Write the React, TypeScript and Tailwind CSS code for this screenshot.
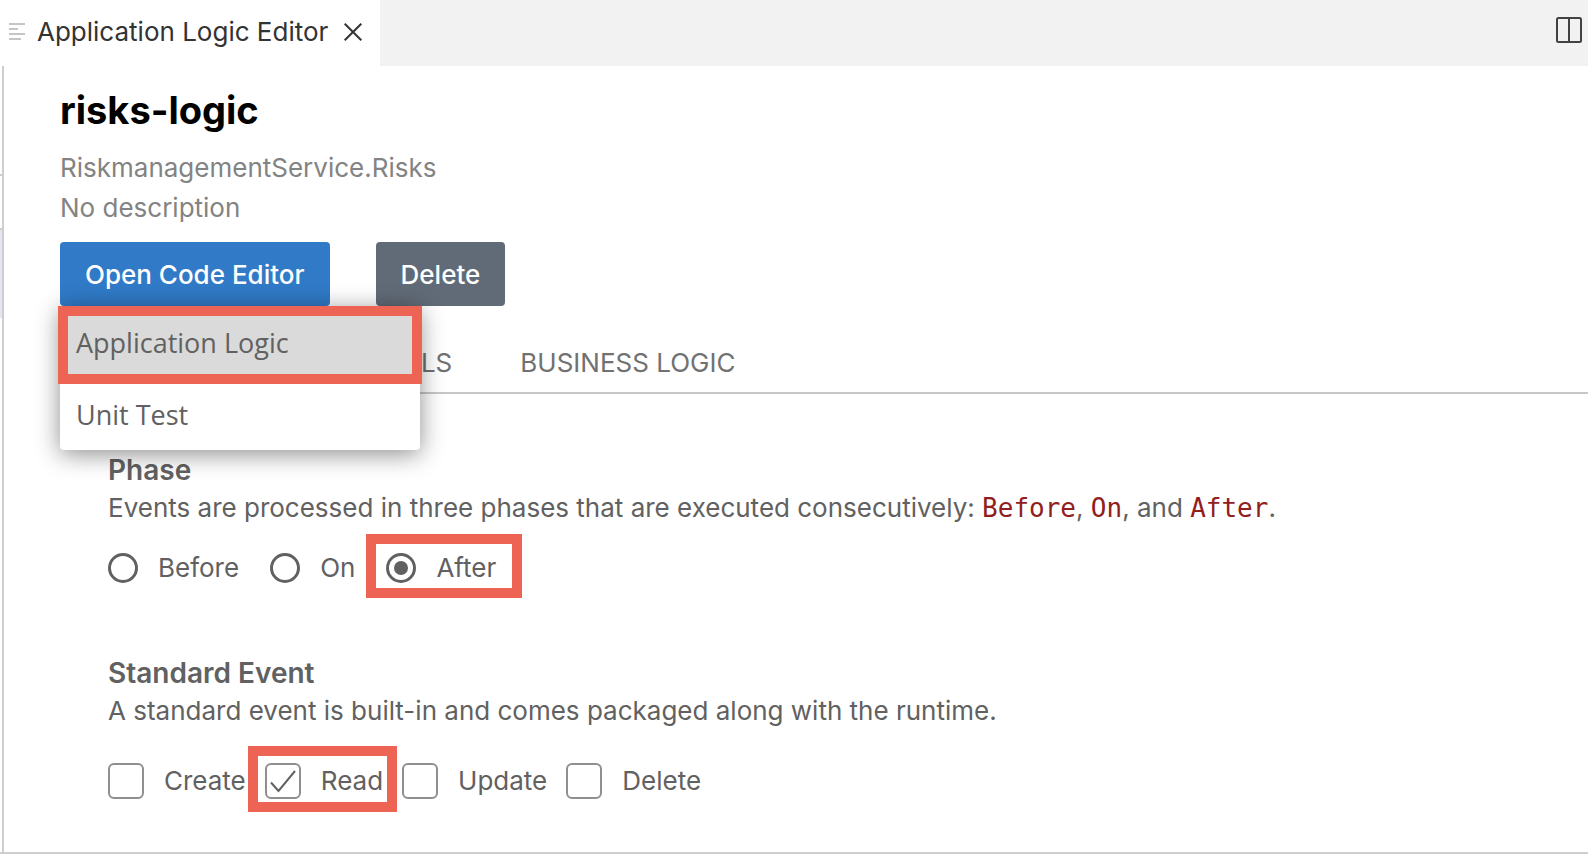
import { useState } from "react";

function LinesIcon() {
  return (
    <svg width="16" height="18" viewBox="0 0 16 18" fill="#c5c5c5" aria-hidden="true">
      <rect x="0" y="0" width="16" height="2" />
      <rect x="0" y="5" width="9" height="2" />
      <rect x="0" y="10" width="16" height="2" />
      <rect x="0" y="15" width="12" height="2" />
    </svg>
  );
}

function CloseIcon() {
  return (
    <svg width="18" height="18" viewBox="0 0 18 18" fill="none" stroke="#333333" strokeWidth="2" aria-hidden="true">
      <path d="M0.7 0.7 17.3 17.3M17.3 0.7 0.7 17.3" />
    </svg>
  );
}

function SplitIcon() {
  return (
    <svg width="26" height="26" viewBox="0 0 26 26" fill="none" stroke="#424242" strokeWidth="2" aria-hidden="true">
      <rect x="1" y="1" width="24" height="24" rx="1.5" />
      <path d="M13 1v24" />
    </svg>
  );
}

const phases = ["Before", "On", "After"];
const events = ["Create", "Read", "Update", "Delete"];

function Phases() {
  const [phase, setPhase] = useState("After");
  return (
    <div className="mt-3 flex h-16 items-center gap-[31px]">
      {phases.map((name) => (
        <label key={name} className="relative flex items-center gap-5">
          <span className="relative flex size-[30px] items-center justify-center">
            <input
              type="radio"
              name="phase"
              checked={phase === name}
              onChange={() => setPhase(name)}
              className="peer size-[30px] appearance-none rounded-full border-3 border-[#616161]"
            />
            <span className="pointer-events-none absolute hidden size-[14px] rounded-full bg-[#616161] peer-checked:block" />
          </span>
          {name}
          {name === "After" && (
            <span className="pointer-events-none absolute -top-[18px] -right-[26px] -bottom-[14px] -left-5 border-10 border-[#ed6454]" />
          )}
        </label>
      ))}
    </div>
  );
}

function Events() {
  const [checked, setChecked] = useState(["Read"]);
  const toggle = (name: string) =>
    setChecked(checked.includes(name) ? checked.filter((n) => n !== name) : [...checked, name]);
  return (
    <div className="mt-[21px] flex h-[66px] items-center gap-[19px]">
      {events.map((name) => (
        <label key={name} className="relative flex h-9 items-center gap-5">
          <span className="relative size-9">
            <input
              type="checkbox"
              checked={checked.includes(name)}
              onChange={() => toggle(name)}
              className="peer block size-9 appearance-none rounded-md border-2 border-[#8f8f8f] bg-white"
            />
            <svg
              className="pointer-events-none absolute inset-0 hidden peer-checked:block"
              width="36"
              height="36"
              viewBox="0 0 36 36"
              fill="none"
              stroke="#616161"
              strokeWidth="2"
              aria-hidden="true"
            >
              <path d="M6 19.5 13.5 28 30 8" />
            </svg>
          </span>
          {name}
          {name === "Read" && (
            <span className="pointer-events-none absolute -top-[17px] -right-[14px] -bottom-[13px] -left-[17px] border-10 border-[#ed6454]" />
          )}
        </label>
      ))}
    </div>
  );
}

export default function App() {
  return (
    <div className="flex min-h-screen flex-col bg-white font-['Inter',sans-serif] text-[26px] leading-8 text-[#616161]">
      <header className="flex h-[66px] items-center justify-between bg-[#f2f2f2] pr-[6px]">
        <div className="flex h-full items-center bg-white pr-[18px] pb-[3px] pl-[9px] text-[#333333]">
          <LinesIcon />
          <span className="ml-3">Application Logic Editor</span>
          <button type="button" aria-label="Close" className="ml-4">
            <CloseIcon />
          </button>
        </div>
        <button type="button" aria-label="Split editor" className="mb-[6px]">
          <SplitIcon />
        </button>
      </header>

      <div className="mb-[6px] flex grow border-b-2 border-[#cecece]">
        <div className="flex w-1 shrink-0 flex-col border-r-2 border-[#cecece]">
          <div className="h-[110px] border-b-2 border-[#cecece]" />
          <div className="h-[54px] border-b-2 border-[#cecece]" />
          <div className="h-[88px] bg-[#e4e6f1]" />
        </div>

        <main className="grow pl-14">
          <h1 className="mt-5 text-[38px] leading-[48px] font-bold text-black">risks-logic</h1>
          <p className="mt-[14px] leading-10 text-[#838383]">RiskmanagementService.Risks</p>
          <p className="leading-10 text-[#838383]">No description</p>

          <div className="mt-[14px] flex gap-[46px] font-medium text-white">
            <div className="relative">
              <button type="button" className="h-16 rounded-sm bg-[#307ac7] px-[25px] pt-[2px]">
                Open Code Editor
              </button>
              <div
                role="menu"
                className="absolute top-16 left-0 z-10 w-[360px] rounded-b-sm bg-white font-['Open_Sans',sans-serif] text-[27px] font-normal text-[#616161] shadow-[0_4px_24px_rgba(0,0,0,0.45)]"
              >
                <button
                  type="button"
                  role="menuitem"
                  className="relative block h-[78px] w-full bg-[#dadada] px-4 pb-1 text-left"
                >
                  Application Logic
                  <span className="pointer-events-none absolute inset-y-0 -inset-x-[2px] border-10 border-[#ed6454]" />
                </button>
                <button type="button" role="menuitem" className="block h-[66px] w-full px-4 pb-1 text-left">
                  Unit Test
                </button>
              </div>
            </div>
            <button type="button" className="h-16 rounded-sm bg-[#616b77] px-[25px] pt-[2px]">
              Delete
            </button>
          </div>

          <nav className="mt-8 flex h-14 gap-[68px] border-b-2 border-[#c8c8c8] pt-[9px] pl-[287px] text-[#717171]">
            <a href="#details">DETAILS</a>
            <a href="#business-logic">BUSINESS LOGIC</a>
          </nav>

          <section className="mt-[60px] pl-12">
            <h2 className="text-[28px] leading-8 font-semibold">Phase</h2>
            <p className="mt-[6px]">
              Events are processed in three phases that are executed consecutively:{" "}
              <code className="font-['DejaVu_Sans_Mono',monospace] text-[26px] text-[#91201d]">Before</code>,{" "}
              <code className="font-['DejaVu_Sans_Mono',monospace] text-[26px] text-[#91201d]">On</code>, and{" "}
              <code className="font-['DejaVu_Sans_Mono',monospace] text-[26px] text-[#91201d]">After</code>.
            </p>
            <Phases />
          </section>

          <section className="mt-[57px] pl-12">
            <h2 className="text-[28px] leading-8 font-semibold">Standard Event</h2>
            <p className="mt-[6px]">A standard event is built-in and comes packaged along with the runtime.</p>
            <Events />
          </section>
        </main>
      </div>
    </div>
  );
}
